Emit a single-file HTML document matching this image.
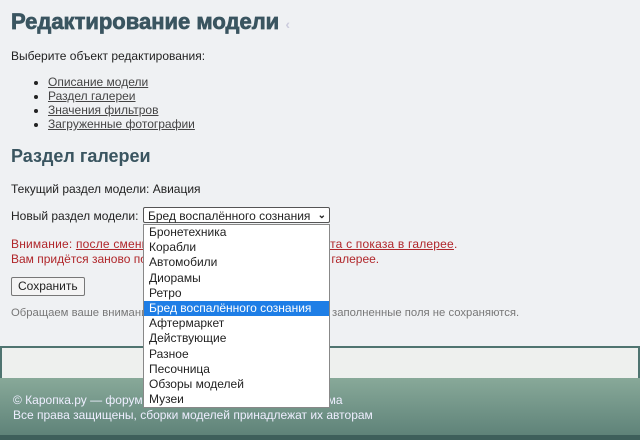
<!DOCTYPE html>
<html><head><meta charset="utf-8"><style>
body{margin:0;width:640px;height:440px;background:#eff1f3;font-family:"Liberation Sans",Arial,sans-serif;position:relative;overflow:hidden;color:#222}
.a{position:absolute;white-space:nowrap}
h1{position:absolute;left:11px;top:9px;margin:0;font-size:22px;font-weight:bold;color:#3a5560;-webkit-text-stroke:0.7px #3a5560}
h2{position:absolute;left:11px;top:146px;margin:0;font-size:18px;font-weight:bold;color:#3a5560}
.t{font-size:12px}
ul{position:absolute;left:0;top:75px;margin:0;padding-left:48px;font-size:12px;line-height:14px}
ul a{color:#444;text-decoration:underline}
.red{color:#b0262a}
.sel{position:absolute;left:143px;top:207px;height:16px;border:1px solid #555;border-radius:2px;background:#fff;font-size:12px;line-height:16px;padding-left:4px;box-sizing:border-box;width:187px}
.list{position:absolute;left:143px;top:224px;width:187px;height:184px;border:1px solid #888;background:#fff;box-sizing:border-box;font-size:12px}
.list div{height:15.2px;line-height:15px;padding-left:5px}
.list .h{background:#1e7ee6;color:#fff}
</style></head><body>
<h1>Редактирование модели <span style="color:#ccd;font-size:14px;-webkit-text-stroke:0">‹</span></h1>
<div class="a t" style="left:11px;top:49px">Выберите объект редактирования:</div>
<ul><li><a>Описание модели</a></li><li><a>Раздел галереи</a></li><li><a>Значения фильтров</a></li><li><a>Загруженные фотографии</a></li></ul>
<h2>Раздел галереи</h2>
<div class="a t" style="left:11px;top:182px">Текущий раздел модели: Авиация</div>
<div class="a t" style="left:11px;top:209px">Новый раздел модели:</div>
<div class="a t red" style="left:11px;top:237px;letter-spacing:0.2px">Внимание: <u>после смены раздела модели она будет снята с показа в галерее</u>.</div>
<div class="a t red" style="left:11px;top:252px">Вам придётся заново подать заявку на размещение её в галерее.</div>
<div class="a t" style="left:11px;top:277px;border:1px solid #777;border-radius:2px;background:#f4f4f4;padding:1px 6px;height:15px;line-height:15px">Сохранить</div>
<div class="a" style="left:11px;top:307px;font-size:11.3px;color:#777">Обращаем ваше внимание, что при ошибке заполнения уже заполненные поля не сохраняются.</div>
<div class="a" style="left:0;top:346px;width:640px;height:32px;background:#eef0ee;border:2px solid #4f7470;border-bottom:none;box-sizing:border-box"></div>
<div class="a" style="left:0;top:378px;width:640px;height:57px;background:linear-gradient(#88a999,#5f8379)"></div>
<div class="a" style="left:0;top:435px;width:640px;height:5px;background:#3e5f5b"></div>
<div class="a" style="left:13px;top:393px;font-size:12px;color:#eef">© Каропка.ру — форум и галерея масштабного моделизма</div>
<div class="a" style="left:13px;top:408px;font-size:12px;color:#eef">Все права защищены, сборки моделей принадлежат их авторам</div>
<div class="sel">Бред воспалённого сознания <span style="position:absolute;right:3px;font-weight:bold;font-size:10px">⌄</span></div>
<div class="list">
<div>Бронетехника</div><div>Корабли</div><div>Автомобили</div><div>Диорамы</div><div>Ретро</div><div class="h">Бред воспалённого сознания</div><div>Афтермаркет</div><div>Действующие</div><div>Разное</div><div>Песочница</div><div>Обзоры моделей</div><div>Музеи</div>
</div>
</body></html>
